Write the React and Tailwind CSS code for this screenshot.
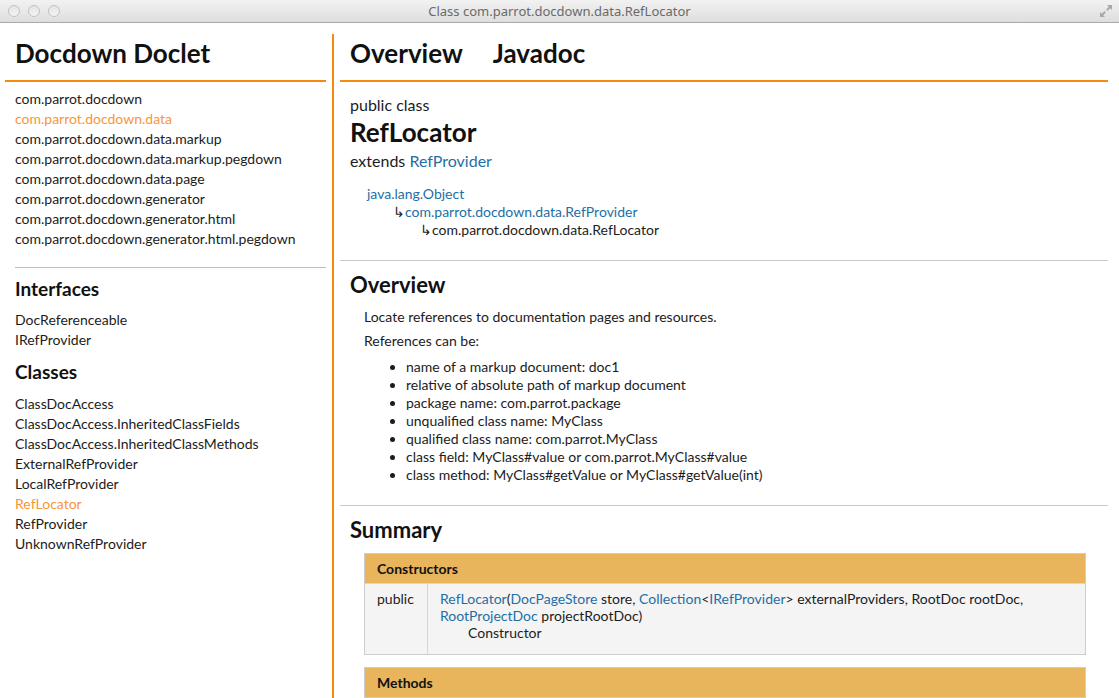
import React from "react";

const packages = [
  "com.parrot.docdown",
  "com.parrot.docdown.data",
  "com.parrot.docdown.data.markup",
  "com.parrot.docdown.data.markup.pegdown",
  "com.parrot.docdown.data.page",
  "com.parrot.docdown.generator",
  "com.parrot.docdown.generator.html",
  "com.parrot.docdown.generator.html.pegdown",
];

const classes = [
  "ClassDocAccess",
  "ClassDocAccess.InheritedClassFields",
  "ClassDocAccess.InheritedClassMethods",
  "ExternalRefProvider",
  "LocalRefProvider",
  "RefLocator",
  "RefProvider",
  "UnknownRefProvider",
];

const refs = [
  "name of a markup document: doc1",
  "relative of absolute path of markup document",
  "package name: com.parrot.package",
  "unqualified class name: MyClass",
  "qualified class name: com.parrot.MyClass",
  "class field: MyClass#value or com.parrot.MyClass#value",
  "class method: MyClass#getValue or MyClass#getValue(int)",
];

function TitleBar() {
  return (
    <div className="relative h-[23px] flex items-center justify-center bg-gradient-to-b from-[#f2f2f2] to-[#dedede] border-b border-[#a9a9a9]">
      <div className="absolute left-[8px] top-[5px] flex gap-[8px]">
        {[0, 1, 2].map(i => (
          <span
            key={i}
            className="w-[12px] h-[12px] rounded-full border border-[#c2c2c2] bg-gradient-to-b from-[#e4e4e4] to-[#f4f4f4]"
          />
        ))}
      </div>
      <span className="text-[13px] text-[#6a6a6a] font-['Noto_Sans',sans-serif] leading-none">
        Class com.parrot.docdown.data.RefLocator
      </span>
      <svg className="absolute right-[5px] top-[3px]" width="16" height="16" viewBox="0 0 16 16">
        <path d="M9 2h5v5l-1.8-1.8-2.7 2.7-1.4-1.4 2.7-2.7z" fill="#a8a8a8" />
        <path d="M7 14H2V9l1.8 1.8 2.7-2.7 1.4 1.4-2.7 2.7z" fill="#a8a8a8" />
      </svg>
    </div>
  );
}

function Sidebar() {
  return (
    <div className="w-[334px] shrink-0 pl-[5px]">
      <div className="mt-[11px] h-[664px] border-r-2 border-[#f68a0c] pr-[6px]">
        <h1 className="px-[10px] pt-[3px] pb-[11px] text-[26px] leading-[32px] font-bold text-[#111] border-b-2 border-[#f68a0c]">
          Docdown Doclet
        </h1>
        <ul className="px-[10px] pt-[7px] text-[14px] leading-[20px]">
          {packages.map(p => (
            <li key={p} className={p === "com.parrot.docdown.data" ? "text-[#f7963a]" : "text-[#1c1c1c]"}>
              {p}
            </li>
          ))}
        </ul>
        <div className="ml-[10px] mt-[18px] h-px bg-[#bdbdbd]" />
        <h3 className="px-[10px] mt-[9px] text-[19px] leading-[24px] font-bold text-[#111]">Interfaces</h3>
        <ul className="px-[10px] mt-[9px] text-[14px] leading-[20px] text-[#1c1c1c]">
          <li>DocReferenceable</li>
          <li>IRefProvider</li>
        </ul>
        <h3 className="px-[10px] mt-[10px] text-[19px] leading-[24px] font-bold text-[#111]">Classes</h3>
        <ul className="px-[10px] mt-[10px] text-[14px] leading-[20px]">
          {classes.map(c => (
            <li key={c} className={c === "RefLocator" ? "text-[#f7963a]" : "text-[#1c1c1c]"}>
              {c}
            </li>
          ))}
        </ul>
      </div>
    </div>
  );
}

function Link({ children }) {
  return <span className="text-[#1f6ea6]">{children}</span>;
}

function Main() {
  return (
    <div className="flex-1 min-w-0 pl-[6px] pr-[11px]">
      <div className="mt-[11px] flex gap-[30px] px-[10px] pt-[3px] pb-[11px] text-[26px] leading-[32px] font-bold text-[#111] border-b-2 border-[#f68a0c]">
        <span>Overview</span>
        <span>Javadoc</span>
      </div>

      <div className="px-[10px] pt-[13px] text-[#1c1c1c]">
        <div className="text-[16px] leading-[20px]">public class</div>
        <h2 className="mt-[1px] text-[26px] leading-[32px] font-bold text-[#111]">RefLocator</h2>
        <div className="mt-[3px] text-[16px] leading-[20px]">
          extends <Link>RefProvider</Link>
        </div>
        <div className="mt-[14px] text-[14px] leading-[18px]">
          <div className="pl-[17px]"><Link>java.lang.Object</Link></div>
          <div className="pl-[43px]">↳<Link>com.parrot.docdown.data.RefProvider</Link></div>
          <div className="pl-[70px]">↳com.parrot.docdown.data.RefLocator</div>
        </div>
      </div>

      <div className="mt-[21px] h-px bg-[#c9c9c9]" />

      <h2 className="px-[10px] mt-[11px] text-[22px] leading-[26px] font-bold text-[#111]">Overview</h2>
      <div className="pl-[24px] pr-[10px] text-[14px] leading-[18px] text-[#1c1c1c]">
        <p className="mt-[10px]">Locate references to documentation pages and resources.</p>
        <p className="mt-[6px]">References can be:</p>
        <ul className="mt-[8px] pl-[42px] list-disc">
          {refs.map(r => (
            <li key={r}>{r}</li>
          ))}
        </ul>
      </div>

      <div className="mt-[21px] h-px bg-[#c9c9c9]" />

      <h2 className="px-[10px] mt-[11px] text-[22px] leading-[26px] font-bold text-[#111]">Summary</h2>

      <div className="ml-[24px] mr-[22px] mt-[10px] border border-[#cdcdcd] text-[14px] text-[#1c1c1c]">
        <div className="h-[29px] flex items-center px-[12px] bg-[#e8b55c] font-bold text-[14px] text-[#111]">
          Constructors
        </div>
        <div className="flex bg-[#f4f4f4] border-t border-[#d6d6d6]">
          <div className="w-[63px] shrink-0 pl-[12px] pt-[6px] pb-[13px] leading-[17px] border-r border-[#d6d6d6]">
            public
          </div>
          <div className="pl-[12px] pt-[6px] pb-[13px] leading-[17px]">
            <Link>RefLocator</Link>(<Link>DocPageStore</Link> store, <Link>Collection</Link>&lt;<Link>IRefProvider</Link>&gt; externalProviders, RootDoc rootDoc,
            <br />
            <Link>RootProjectDoc</Link> projectRootDoc)
            <div className="pl-[28px]">Constructor</div>
          </div>
        </div>
      </div>

      <div className="ml-[24px] mr-[22px] mt-[12px] border border-[#cdcdcd]">
        <div className="h-[29px] flex items-center px-[12px] bg-[#e8b55c] font-bold text-[14px] text-[#111]">
          Methods
        </div>
      </div>
    </div>
  );
}

export default function App() {
  return (
    <div className="w-[1119px] h-[698px] overflow-hidden bg-white font-['Lato',sans-serif]">
      <TitleBar />
      <div className="flex">
        <Sidebar />
        <Main />
      </div>
    </div>
  );
}
